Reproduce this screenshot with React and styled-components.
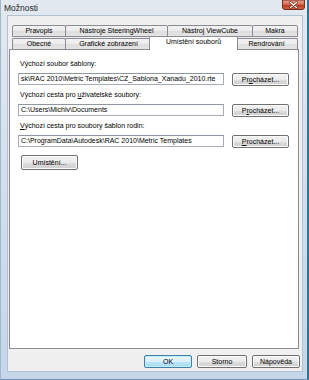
import styled, { createGlobalStyle } from "styled-components";

const Global = createGlobalStyle`
    html, body {
        margin: 0;
        padding: 0;
        background: #ffffff;
    }
    body {
        font-family: "Liberation Sans", Arial, sans-serif;
    }
`

const Window = styled.div`
    width: 309px;
    height: 380px;
    box-sizing: border-box;
    display: flex;
    flex-direction: column;
    background: linear-gradient(#e3e9f1, #cfdcec 60%, #c5d6ea);
    border-left: 1px solid #9fb6cf;
    border-right: 2px solid #2c7794;
    border-bottom: 1px solid #6f93b4;
`
const TitleBar = styled.div`
    height: 15px;
    flex: none;
    display: flex;
    align-items: flex-start;
    justify-content: space-between;
    padding: 0 2px 0 3px;
`
const Title = styled.span`
    font-size: 8.5px;
    line-height: 16px;
    color: #1e1e1e;
`
const CloseButton = styled.div`
    width: 23px;
    height: 10px;
    flex: none;
    line-height: 0;
`
const Client = styled.div`
    flex: 1;
    display: flex;
    flex-direction: column;
    margin: 0 4px 7px 6px;
    padding: 9px 3px 0 1px;
    background: #f0f0f0;
    border: 1px solid #b2c2d4;
`
const Tabs = styled.div`
    display: flex;
    flex-direction: column;
    margin: 0 1px 0 3px;
`
const TabRow = styled.div`
    display: flex;
    align-items: flex-end;
    margin-top: ${(p) => (p.$second ? "-1px" : "0")};
`
const Tab = styled.div`
    width: ${(p) => p.$w}px;
    height: ${(p) => (p.$selected ? 14 : p.$second ? 11 : 12)}px;
    box-sizing: border-box;
    flex: none;
    margin-left: ${(p) => (p.$selected ? -3 : p.$first ? 0 : -1)}px;
    margin-right: ${(p) => (p.$selected ? -2 : 0)}px;
    margin-bottom: ${(p) => (p.$selected ? -1 : 0)}px;
    border: 1px solid #898c95;
    border-bottom: ${(p) => (p.$second ? "none" : "1px solid #898c95")};
    border-radius: 2px 2px 0 0;
    background: ${(p) =>
        p.$selected ? "#ffffff" : "linear-gradient(#f3f3f3, #ebebeb 50%, #dedede 51%, #e4e4e4)"};
    position: relative;
    z-index: ${(p) => (p.$selected ? 2 : 0)};
    font-size: 7px;
    line-height: 10px;
    text-align: center;
    color: #000;
    white-space: nowrap;
`
const Panel = styled.div`
    flex: 1;
    display: flex;
    flex-direction: column;
    background: #ffffff;
    border: 1px solid #898c95;
    padding: 9px 9px 0 8px;
`
const Group = styled.div`
    display: flex;
    flex-direction: column;
    margin-bottom: 4px;
`
const Label = styled.div`
    font-size: 7px;
    line-height: 10px;
    padding-left: 2px;
    color: #000;
    white-space: nowrap;
`
const FieldRow = styled.div`
    display: flex;
    align-items: center;
    justify-content: space-between;
    height: 14px;
    margin-top: 3px;
`
const Field = styled.div`
    width: 206px;
    height: 12px;
    box-sizing: border-box;
    border: 1px solid #a5acb5;
    border-top-color: #8e96a1;
    background: #ffffff;
    font-size: 7px;
    line-height: 10px;
    padding-left: 2px;
    overflow: hidden;
    white-space: nowrap;
    color: #000;
`
const Button = styled.div`
    width: ${(p) => p.$w}px;
    height: ${(p) => p.$h || 13}px;
    box-sizing: border-box;
    flex: none;
    display: flex;
    align-items: center;
    justify-content: center;
    border: 1px solid ${(p) => (p.$default ? "#3c7fb1" : "#707070")};
    border-radius: 2px;
    box-shadow: inset 0 0 0 1px ${(p) => (p.$default ? "#c9ecfc" : "#fbfbfb")};
    background: ${(p) =>
        p.$default
            ? "linear-gradient(#eaf6fd, #d9f0fc 50%, #bee6fd 51%, #a7d9f5)"
            : "linear-gradient(#f2f2f2, #ebebeb 50%, #dddddd 51%, #cfcfcf)"};
    font-size: 7px;
    color: #000;
    white-space: nowrap;
    margin-left: ${(p) => p.$ml || 0}px;
    margin-top: ${(p) => p.$mt || 0}px;
`
const Footer = styled.div`
    display: flex;
    justify-content: flex-end;
    gap: 5px;
    padding: 6px 0 3px 0;
    margin-right: -1px;
`

// Vista-style red close glyph
function CloseIcon() {
    return (
        <svg width="23" height="10" viewBox="0 0 23 10">
            <defs>
                <linearGradient id="closeBg" x1="0" y1="0" x2="0" y2="1">
                    <stop offset="0" stopColor="#eaa591" />
                    <stop offset="0.45" stopColor="#d9705a" />
                    <stop offset="0.55" stopColor="#bb3c24" />
                    <stop offset="1" stopColor="#d1654a" />
                </linearGradient>
            </defs>
            <path d="M0.5 0 V7 Q0.5 9.5 3 9.5 H20 Q22.5 9.5 22.5 7 V0 Z" fill="url(#closeBg)" stroke="#7a2a1c" strokeWidth="1" />
            <path d="M8.5 2.5 L14.5 7.5 M14.5 2.5 L8.5 7.5" stroke="#6b2a1e" strokeWidth="2.6" strokeLinecap="round" />
            <path d="M8.5 2.5 L14.5 7.5 M14.5 2.5 L8.5 7.5" stroke="#ffffff" strokeWidth="1.4" strokeLinecap="round" />
        </svg>
    )
}

const rowOne = [
    { label: "Pravopis", w: 54 },
    { label: "Nástroje SteeringWheel", w: 103 },
    { label: "Nástroj ViewCube", w: 86 },
    { label: "Makra", w: 46 },
]
const rowTwo = [
    { label: "Obecné", w: 54 },
    { label: "Grafické zobrazení", w: 87 },
    { label: "Umístění souborů", w: 89, selected: true },
    { label: "Rendrování", w: 63 },
]

const paths = [
    { label: <>Výchozí soubor šablony:</>, value: "sk\\RAC 2010\\Metric Templates\\CZ_Sablona_Xanadu_2010.rte", btn: <>Pr<u>o</u>cházet...</> },
    { label: <>Výchozí cesta pro <u>u</u>živatelské soubory:</>, value: "C:\\Users\\Michlv\\Documents", btn: <>P<u>r</u>ocházet...</> },
    { label: <><u>V</u>ýchozí cesta pro soubory šablon rodin:</>, value: "C:\\ProgramData\\Autodesk\\RAC 2010\\Metric Templates", btn: <><u>P</u>rocházet...</> },
]

function App() {
    return (
        <>
            <Global />
            <Window>
                <TitleBar>
                    <Title>Možnosti</Title>
                    <CloseButton title="Zavřít"><CloseIcon /></CloseButton>
                </TitleBar>
                <Client>
                    <Tabs>
                        <TabRow>
                            {rowOne.map((t, i) => (
                                <Tab key={t.label} $w={t.w} $first={i === 0}>{t.label}</Tab>
                            ))}
                        </TabRow>
                        <TabRow $second>
                            {rowTwo.map((t, i) => (
                                <Tab key={t.label} $w={t.w} $first={i === 0} $second $selected={t.selected}>{t.label}</Tab>
                            ))}
                        </TabRow>
                    </Tabs>
                    <Panel>
                        {paths.map((p, i) => (
                            <Group key={i}>
                                <Label>{p.label}</Label>
                                <FieldRow>
                                    <Field>{p.value}</Field>
                                    <Button $w={57}>{p.btn}</Button>
                                </FieldRow>
                            </Group>
                        ))}
                        <Button $w={57} $h={15} $ml={3} $mt={3}>Umístění...</Button>
                    </Panel>
                    <Footer>
                        <Button $w={48} $default>OK</Button>
                        <Button $w={50}>Storno</Button>
                        <Button $w={48}>Nápověda</Button>
                    </Footer>
                </Client>
            </Window>
        </>
    )
}

export default App;
